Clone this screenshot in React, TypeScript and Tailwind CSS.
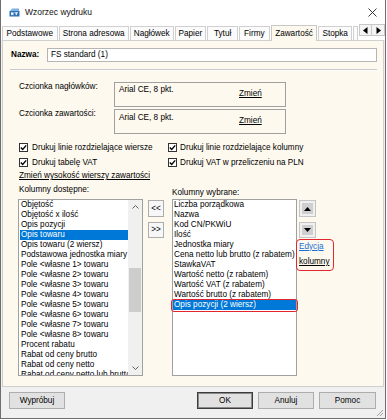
import React from "react";

const leftItems = [
  "Objętość",
  "Objętość x ilość",
  "Opis pozycji",
  "Opis towaru",
  "Opis towaru (2 wiersz)",
  "Podstawowa jednostka miary",
  "Pole <własne 1> towaru",
  "Pole <własne 2> towaru",
  "Pole <własne 3> towaru",
  "Pole <własne 4> towaru",
  "Pole <własne 5> towaru",
  "Pole <własne 6> towaru",
  "Pole <własne 7> towaru",
  "Pole <własne 8> towaru",
  "Procent rabatu",
  "Rabat od ceny brutto",
  "Rabat od ceny netto",
  "Rabat od ceny netto lub brutto",
];

const rightItems = [
  "Liczba porządkowa",
  "Nazwa",
  "Kod CN/PKWiU",
  "Ilość",
  "Jednostka miary",
  "Cena netto lub brutto (z rabatem)",
  "StawkaVAT",
  "Wartość netto (z rabatem)",
  "Wartość VAT (z rabatem)",
  "Wartość brutto (z rabatem)",
  "Opis pozycji (2 wiersz)",
];

const tabs: { label: string; cls: string; sel?: boolean }[] = [
  { label: "Podstawowe", cls: "w-[56px]" },
  { label: "Strona adresowa", cls: "w-[71px]" },
  { label: "Nagłówek", cls: "w-[44px]" },
  { label: "Papier", cls: "w-[32px]" },
  { label: "Tytuł", cls: "w-[31px]" },
  { label: "Firmy", cls: "w-[31px]" },
  { label: "Zawartość", cls: "w-[47px]", sel: true },
  { label: "Stopka", cls: "w-[34px]" },
  { label: "", cls: "w-[5px]" },
];

function Check() {
  return (
    <span className="w-[9px] h-[9px] border border-[#333333] bg-white flex items-center justify-center shrink-0">
      <svg width="7" height="7" viewBox="0 0 7 7">
        <path d="M0.8 3.5 L2.7 5.4 L6.2 1.4" fill="none" stroke="#000" strokeWidth="1.4" />
      </svg>
    </span>
  );
}

function Btn({ label, cls }: { label: string; cls: string }) {
  return (
    <div className={`h-[17px] border border-[#adadad] bg-[#e1e1e1] flex items-center justify-center ${cls}`}>
      {label}
    </div>
  );
}

export default function App() {
  return (
    <div className="w-[387px] h-[420px] bg-white font-['Liberation_Sans',Arial,sans-serif] text-[8.2px] text-black leading-[10px]">
      <div className="w-[386px] h-[419px] flex flex-col bg-[#f0f0f0] border-x border-b border-[#6e6e6e] relative">
        {/* Title bar */}
        <div className="h-[24px] bg-white flex items-center shrink-0">
          <svg className="ml-[8px]" width="11" height="9" viewBox="0 0 11 9">
            <path d="M1 3 L3 0.5 L10 0.5 L10 3 Z" fill="#7fb3e0" />
            <rect x="0.5" y="3" width="10" height="5.5" fill="#2f6fb3" />
            <rect x="2" y="4.3" width="2.5" height="2.8" fill="#e8f1fa" />
            <rect x="5.5" y="4.3" width="3.5" height="1" fill="#e8f1fa" />
            <rect x="6.7" y="4.3" width="1.2" height="2.8" fill="#e8f1fa" />
          </svg>
          <span className="ml-[5px] text-[8.5px] text-[#111]">Wzorzec wydruku</span>
          <svg className="ml-auto mr-[8px]" width="9" height="9" viewBox="0 0 9 9">
            <path d="M0.5 0.5 L8.5 8.5 M8.5 0.5 L0.5 8.5" stroke="#222" strokeWidth="0.9" />
          </svg>
        </div>

        {/* Tabs */}
        <div className="h-[16px] bg-white flex items-end pl-[1px] gap-[1px] shrink-0">
          {tabs.map((t, i) =>
            t.sel ? (
              <div
                key={i}
                className={`${t.cls} h-[16px] -mb-px relative z-10 bg-[#fdf9ef] border border-b-0 border-[#c8c8c8] flex items-center justify-center whitespace-nowrap`}
              >
                {t.label}
              </div>
            ) : (
              <div
                key={i}
                className={`${t.cls} h-[14px] bg-[#fbfbfb] border border-b-0 border-[#d0d0d0] flex items-center justify-center whitespace-nowrap overflow-hidden`}
              >
                {t.label}
              </div>
            )
          )}
          <div className="self-start flex">
            <div className="w-[13px] h-[12px] border border-[#c8c8c8] bg-[#f4f4f4] flex items-center justify-center">
              <svg width="5" height="7" viewBox="0 0 5 7">
                <path d="M4.5 0 L0 3.5 L4.5 7 Z" fill="#000" />
              </svg>
            </div>
            <div className="w-[13px] h-[12px] border border-l-0 border-[#c8c8c8] bg-[#f4f4f4] flex items-center justify-center">
              <svg width="5" height="7" viewBox="0 0 5 7">
                <path d="M0.5 0 L5 3.5 L0.5 7 Z" fill="#000" />
              </svg>
            </div>
          </div>
        </div>

        {/* Panel */}
        <div className="mx-[1px] h-[347px] shrink-0 bg-[#fdf9ef] border border-[#d0d0d0] flex flex-col">
          {/* Nazwa */}
          <div className="mt-[7px] h-[14px] flex items-center">
            <div className="pl-[8px] w-[44px] font-bold">Nazwa:</div>
            <div className="flex-1 mr-[6px] h-[14px] border border-[#b5b5b5] bg-white pl-[3px] flex items-center">
              FS standard (1)
            </div>
          </div>
          {/* Separator */}
          <div className="mt-[7px] ml-[7px] mr-[6px] border-t border-t-[#c9c9c9] border-b border-b-white" />

          {/* Font rows */}
          <div className="mt-[11px] flex">
            <div className="pl-[16px] w-[111px]">Czcionka nagłówków:</div>
            <div className="w-[172px] h-[25px] border border-[#a0a0a0] flex items-start">
              <span className="mt-[2px] ml-[4px] w-[120px]">Arial CE, 8 pkt.</span>
              <span className="mt-[6px] underline">Zmień</span>
            </div>
          </div>
          <div className="mt-[2px] flex">
            <div className="pl-[16px] w-[111px]">Czcionka zawartości:</div>
            <div className="w-[172px] h-[25px] border border-[#a0a0a0] flex items-start">
              <span className="mt-[3px] ml-[4px] w-[120px]">Arial CE, 8 pkt.</span>
              <span className="mt-[6px] underline">Zmień</span>
            </div>
          </div>

          {/* Checkboxes */}
          <div className="mt-[6px] pl-[16px] grid grid-cols-[149px_1fr]">
            <div className="h-[15px] flex items-center gap-[4px]">
              <Check />
              <span>Drukuj linie rozdzielające wiersze</span>
            </div>
            <div className="h-[15px] flex items-center gap-[3px]">
              <Check />
              <span>Drukuj linie rozdzielające kolumny</span>
            </div>
            <div className="h-[15px] flex items-center gap-[4px]">
              <Check />
              <span>Drukuj tabelę VAT</span>
            </div>
            <div className="h-[15px] flex items-center gap-[3px]">
              <Check />
              <span>Drukuj VAT w przeliczeniu na PLN</span>
            </div>
          </div>
          <div className="h-[12px] leading-[12px] pl-[16px]">
            <span className="underline">Zmień wysokość wierszy zawartości</span>
          </div>

          {/* Columns */}
          <div className="mt-[2px] flex items-start">
            {/* Left */}
            <div className="ml-[15px] w-[125px] flex flex-col">
              <div className="h-[15px] leading-[12px] pl-[1px]">Kolumny dostępne:</div>
              <div className="h-[177px] border border-[#a0a0a0] bg-white flex overflow-hidden">
                <div className="flex-1 flex flex-col overflow-hidden">
                  {leftItems.map((it, i) => (
                    <div
                      key={i}
                      className={
                        i === 3
                          ? "h-[10px] shrink-0 leading-[10px] ml-[1px] pl-[1px] whitespace-nowrap overflow-hidden bg-[#0078d7] text-white"
                          : "h-[10px] shrink-0 leading-[10px] ml-[1px] pl-[1px] whitespace-nowrap overflow-hidden"
                      }
                    >
                      {it}
                    </div>
                  ))}
                </div>
                <div className="w-[14px] bg-[#f0f0f0] flex flex-col shrink-0">
                  <div className="h-[14px] flex items-center justify-center">
                    <svg width="7" height="4" viewBox="0 0 7 4">
                      <path d="M0.5 3.5 L3.5 0.5 L6.5 3.5" fill="none" stroke="#606060" strokeWidth="1" />
                    </svg>
                  </div>
                  <div className="flex-1">
                    <div className="mt-[54px] h-[44px] mx-[1px] bg-[#cdcdcd]" />
                  </div>
                  <div className="h-[14px] flex items-center justify-center">
                    <svg width="7" height="4" viewBox="0 0 7 4">
                      <path d="M0.5 0.5 L3.5 3.5 L6.5 0.5" fill="none" stroke="#606060" strokeWidth="1" />
                    </svg>
                  </div>
                </div>
              </div>
            </div>

            {/* Middle buttons */}
            <div className="ml-[5px] w-[16px] pt-[16px] flex flex-col">
              <div className="h-[17px] border border-[#adadad] bg-[#f7f7f7] flex items-center justify-center">&lt;&lt;</div>
              <div className="mt-[5px] h-[16px] border border-[#adadad] bg-[#f7f7f7] flex items-center justify-center">&gt;&gt;</div>
            </div>

            {/* Right */}
            <div className="ml-[8px] w-[125px] flex flex-col">
              <div className="h-[15px] pt-[3px] leading-[12px]">Kolumny wybrane:</div>
              <div className="h-[177px] border border-[#a0a0a0] bg-white flex flex-col relative">
                {rightItems.map((it, i) => (
                  <div
                    key={i}
                    className={
                      i === 10
                        ? "h-[10px] shrink-0 leading-[10px] pl-[1px] whitespace-nowrap overflow-hidden bg-[#0078d7] text-white"
                        : "h-[10px] shrink-0 leading-[10px] pl-[1px] whitespace-nowrap overflow-hidden"
                    }
                  >
                    {it}
                  </div>
                ))}
                <div className="absolute left-[-2px] top-[99px] w-[127px] h-[13px] border-[1.5px] border-[#e3262e] rounded-[3px] z-10" />
              </div>
            </div>

            {/* Far right */}
            <div className="ml-[2px] pt-[16px] flex flex-col items-start">
              <div className="w-[17px] h-[17px] border border-[#c4c4c4] bg-[#f0f0f0] p-[2px]">
                <div className="w-full h-full bg-[#cfcfcf] flex items-center justify-center">
                  <svg width="7" height="4" viewBox="0 0 7 4">
                    <path d="M0 4 L3.5 0 L7 4 Z" fill="#000" />
                  </svg>
                </div>
              </div>
              <div className="mt-[5px] w-[17px] h-[16px] border border-[#c4c4c4] bg-[#f0f0f0] p-[2px]">
                <div className="w-full h-full bg-[#cfcfcf] flex items-center justify-center">
                  <svg width="7" height="4" viewBox="0 0 7 4">
                    <path d="M0 0 L3.5 4 L7 0 Z" fill="#000" />
                  </svg>
                </div>
              </div>
              <div className="mt-[1px] -ml-[3px] w-[38px] h-[32px] border-[1.5px] border-[#e3262e] rounded-[4px] pl-[2px] pt-[1.5px] relative z-10 flex flex-col items-start">
                <span className="underline text-[#1a6fd0] leading-[10px]">Edycja</span>
                <span className="mt-[5px] underline leading-[10px]">kolumny</span>
              </div>
            </div>
          </div>
        </div>

        {/* Footer */}
        <div className="flex-1 flex items-start pt-[5px] pl-[8px] pr-[9px]">
          <Btn label="Wypróbuj" cls="w-[56px]" />
          <div className="ml-auto flex">
            <div className="w-[56px] h-[17px] border border-[#3c3c3c] shadow-[inset_0_0_0_1px_#8a8a8a] bg-[#e1e1e1] flex items-center justify-center">OK</div>
            <Btn label="Anuluj" cls="ml-[5px] w-[56px]" />
            <Btn label="Pomoc" cls="ml-[5px] w-[57px]" />
          </div>
        </div>
        <svg className="absolute right-[1px] bottom-[1px]" width="9" height="9" viewBox="0 0 9 9">
          <path d="M8 2 L2 8 M8 5 L5 8 M8 8 L8 8" stroke="#a0a0a0" strokeWidth="1" />
        </svg>
      </div>
    </div>
  );
}
